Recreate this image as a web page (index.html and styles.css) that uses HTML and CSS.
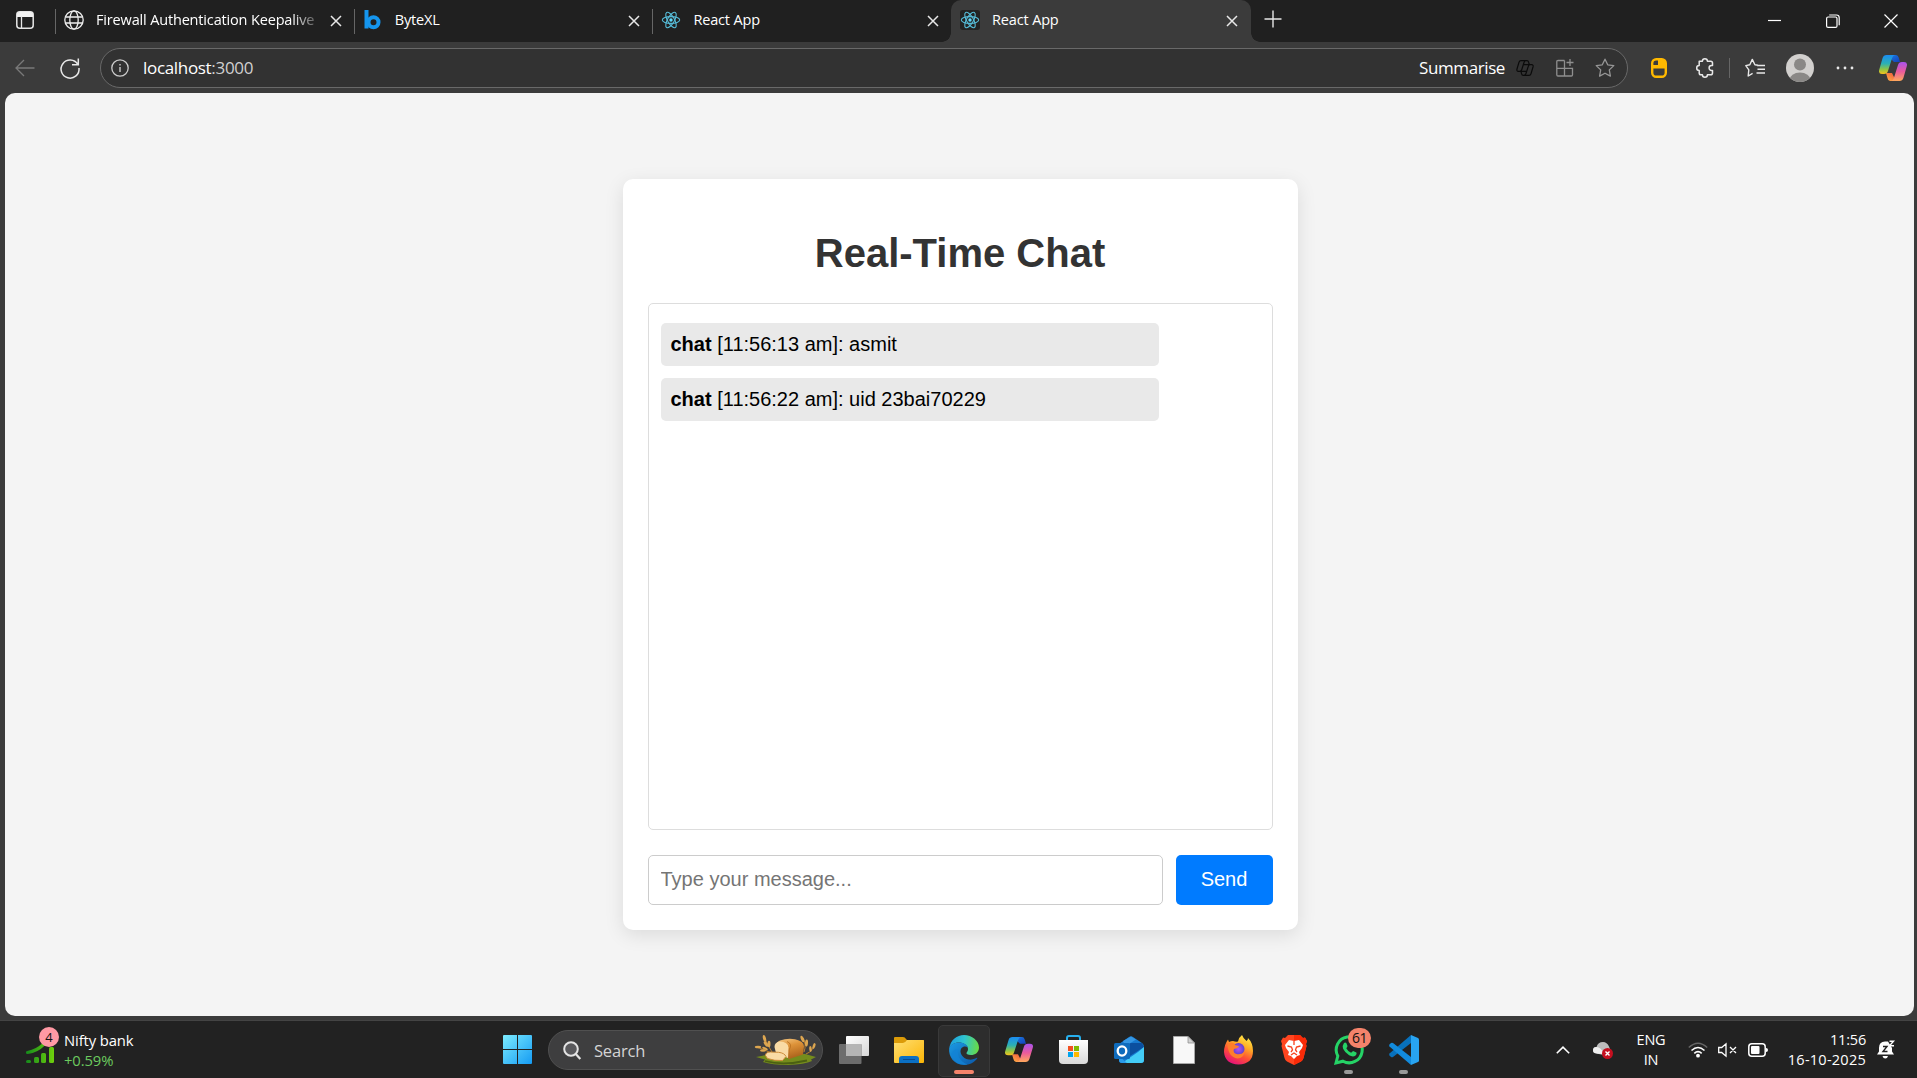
FILE: index.html
```html
<!DOCTYPE html>
<html lang="en">
<head>
<meta charset="utf-8">
<title>React App</title>
<link rel="stylesheet" href="styles.css">
</head>
<body>
<svg class="defs" width="0" height="0" aria-hidden="true">
  <defs>
    <linearGradient id="cpA" x1="0" y1="0" x2="0" y2="1"><stop offset="0" stop-color="#1b8cf2"/><stop offset=".45" stop-color="#2bb0b5"/><stop offset=".75" stop-color="#8fc544"/><stop offset="1" stop-color="#f7c31c"/></linearGradient>
    <linearGradient id="cpB" x1="0" y1="0" x2="0" y2="1"><stop offset="0" stop-color="#a953ee"/><stop offset=".5" stop-color="#ea5a9c"/><stop offset="1" stop-color="#ffa85c"/></linearGradient>
    <linearGradient id="cpC" x1="0" y1="0" x2="1" y2="1"><stop offset="0" stop-color="#1b7fe8"/><stop offset="1" stop-color="#1440b8"/></linearGradient>
    <linearGradient id="cpD" x1="0" y1="1" x2="1" y2="0"><stop offset="0" stop-color="#ffb347"/><stop offset="1" stop-color="#ee4b3a"/></linearGradient>
    <symbol id="x" viewBox="0 0 12 12"><path d="M1 1l10 10M11 1L1 11" stroke="#e8e8e8" stroke-width="1.5" fill="none"/></symbol>
    <symbol id="react" viewBox="0 0 20 20"><g fill="none" stroke="#56bcd8" stroke-width="1.1"><ellipse cx="10" cy="10" rx="8.7" ry="3.4"/><ellipse cx="10" cy="10" rx="8.7" ry="3.4" transform="rotate(60 10 10)"/><ellipse cx="10" cy="10" rx="8.7" ry="3.4" transform="rotate(120 10 10)"/></g><circle cx="10" cy="10" r="1.7" fill="#61dafb"/></symbol>
    <symbol id="copilot" viewBox="0 0 28 26"><path d="M8 0h9q2 0 2.700 2.500L21 7h-6z" fill="url(#cpC)"/><path d="M10 26H19q-3 0-3.500-3L13 18H7l1.400 5q.6 3 2.600 3z" fill="url(#cpD)"/><path d="M7.500 0H16q-2 .3-2.900 3L9 16q-.8 3-4 3H3q-4 0-2.700-4.500L3.600 3Q4.500 0 7.500 0z" fill="url(#cpA)"/><path d="M20.500 26H12q2-.3 2.900-3L19 10q.8-3 4-3h2q4 0 2.700 4.500L24.400 23Q23.500 26 20.500 26z" fill="url(#cpB)"/></symbol>
  </defs>
</svg>

<header class="tabstrip">
  <svg class="workspace" viewBox="0 0 18 18"><rect x=".8" y=".8" width="16.400" height="16.400" rx="3" fill="none" stroke="#e6e6e6" stroke-width="1.500"/><path d="M1 3.500Q1 1 3.500 1h11Q17 1 17 3.500V6H1z" fill="#f2f2f2"/><path d="M5.500 5v12" stroke="#e6e6e6" stroke-width="1.300"/></svg>
  <div class="tab divided">
    <svg class="fav" viewBox="0 0 20 20"><g fill="none" stroke="#eee" stroke-width="1.300"><circle cx="10" cy="10" r="9.200"/><ellipse cx="10" cy="10" rx="4.200" ry="9.200"/><path d="M1.500 7h17M1.500 13h17"/></g></svg>
    <span class="tab-title fade">Firewall Authentication Keepalive</span>
    <svg class="close"><use href="#x"/></svg>
  </div>
  <div class="tab divided">
    <svg class="fav" viewBox="0 0 20 20"><path d="M3.500 0v18.500" stroke="#1595ee" stroke-width="4"/><circle cx="10.500" cy="12.200" r="5" fill="none" stroke="#1595ee" stroke-width="4"/></svg>
    <span class="tab-title">ByteXL</span>
    <svg class="close"><use href="#x"/></svg>
  </div>
  <div class="tab divided">
    <svg class="fav"><use href="#react"/></svg>
    <span class="tab-title">React App</span>
    <svg class="close"><use href="#x"/></svg>
  </div>
  <div class="tab active">
    <svg class="fav tile"><use href="#react"/></svg>
    <span class="tab-title">React App</span>
    <svg class="close"><use href="#x"/></svg>
  </div>
  <svg class="newtab" viewBox="0 0 18 18"><path d="M9 .5v17M.5 9h17" stroke="#e6e6e6" stroke-width="1.400"/></svg>
  <div class="controls">
    <svg viewBox="0 0 14 14"><path d="M0 6.500h13" stroke="#fff" stroke-width="1.200"/></svg>
    <svg viewBox="0 0 14 14"><rect x=".6" y="3" width="10.400" height="10.400" rx="1.500" fill="none" stroke="#fff" stroke-width="1.200"/><path d="M3.200 1h7.300q2.700 0 2.700 2.700v7.500" fill="none" stroke="#fff" stroke-width="1.200"/></svg>
    <svg viewBox="0 0 14 14"><path d="M.5.5l13 13M13.500.5l-13 13" stroke="#fff" stroke-width="1.200"/></svg>
  </div>
</header>

<nav class="toolbar">
  <svg class="back" viewBox="0 0 20 18"><path d="M19.500 9H1M9 1L1 9l8 8" fill="none" stroke="#797979" stroke-width="1.300"/></svg>
  <svg class="reload" viewBox="0 0 20 20"><path d="M17.800 6.500A9 9 0 1 0 19 10M18.300 .5v6.300h-6.300" fill="none" stroke="#e8e8e8" stroke-width="1.500"/></svg>
  <div class="address">
    <svg class="info" viewBox="0 0 18 18"><circle cx="9" cy="9" r="8.200" fill="none" stroke="#ccc" stroke-width="1.300"/><path d="M9 8v5M9 5v1.500" stroke="#ccc" stroke-width="1.400"/></svg>
    <span class="url">localhost<span class="port">:3000</span></span>
    <span class="summarise">Summarise</span>
    <svg class="a-copilot" viewBox="0 0 18 16"><g fill="none" stroke="#0b0b0b" stroke-width="1.200"><path d="M5 .7h6q1.200 0 1.600 1.500l.7 2.300M5 .7q-1.500 0-2 1.600L1 9q-.6 2.300 1.400 2.300h1.400q1.500 0 2-1.800L8 2.500Q8.600.7 10 .7M13 15.300H7.200q-1.200 0-1.600-1.500L5 11.300M13 15.300q1.500 0 2-1.600L17 7q.6-2.300-1.400-2.300h-1.400q-1.500 0-2 1.800L10 13.500q-.6 1.800-2 1.800M7 4.700h7M5 11.300h6"/></g></svg>
    <svg class="a-apps" viewBox="0 0 18 18"><path d="M8.500 1.500H2q-1.200 0-1.200 1.200v13.100Q.8 17 2 17h13.300q1.200 0 1.200-1.200V9.300H.8M8.500 1.500V17M14 0v7M10.500 3.500h7" fill="none" stroke="#8f8f8f" stroke-width="1.300"/></svg>
    <svg class="a-star" viewBox="0 0 20 20"><path d="M10 1.200l2.700 5.600 6.100.8-4.500 4.300 1.100 6.200L10 15.200l-5.400 2.900 1.100-6.200L1.200 7.600l6.100-.8z" fill="none" stroke="#969696" stroke-width="1.300" stroke-linejoin="round"/></svg>
  </div>
  <svg class="mouse" viewBox="0 0 16 20"><rect x="1.200" y="1.200" width="13.600" height="17.600" rx="4" fill="none" stroke="#ffb900" stroke-width="2.400"/><path d="M1.500 10.500h13V5q0-3.500-3.500-3.500H7V7H1.500z" fill="#ffb900"/></svg>
  <svg class="puzzle" viewBox="0 0 18 20"><path d="M3.200 3.200h3.200a2.500 2.500 0 0 1 5 0h3.300q1.800 0 1.800 1.800v2.600h-1a2.400 2.400 0 0 0 0 4.800h1V15q0 1.800-1.800 1.800h-3.300a2.500 2.500 0 0 1-5 0H5q-1.800 0-1.800-1.800v-2.500a2.500 2.500 0 0 1 0-5z" fill="none" stroke="#e8e8e8" stroke-width="1.500" stroke-linejoin="round"/></svg>
  <i class="rule"></i>
  <svg class="favs" viewBox="0 0 20 20"><path d="M13 7.200l-3.100-.4-2.600-5.400-2.500 5.400-4 .8 3 4.200-.6 6.200 4.400-2.700M12 7.500h8M12.500 11.300H20M11.500 15H20" fill="none" stroke="#e8e8e8" stroke-width="1.400" stroke-linejoin="round"/></svg>
  <svg class="avatar" viewBox="0 0 28 28"><defs><clipPath id="av"><circle cx="14" cy="14" r="14"/></clipPath></defs><g clip-path="url(#av)"><path d="M0 0h28v28H0z" fill="#d2d0ce"/><circle cx="14" cy="10.500" r="6" fill="#8a8886"/><ellipse cx="14" cy="26" rx="10.500" ry="7.500" fill="#8a8886"/></g></svg>
  <svg class="dots" viewBox="0 0 18 4"><g fill="#e8e8e8"><circle cx="2" cy="2" r="1.400"/><circle cx="9" cy="2" r="1.400"/><circle cx="16" cy="2" r="1.400"/></g></svg>
  <svg class="copilot"><use href="#copilot"/></svg>
</nav>

<main class="page">
  <section class="card">
    <h1>Real-Time Chat</h1>
    <div class="messages">
      <p class="message"><strong>chat</strong> [11:56:13 am]: asmit</p>
      <p class="message"><strong>chat</strong> [11:56:22 am]: uid 23bai70229</p>
    </div>
    <form class="composer">
      <input type="text" placeholder="Type your message...">
      <button type="button">Send</button>
    </form>
  </section>
</main>

<footer class="taskbar">
  <div class="widget">
    <div class="w-icon">
      <svg viewBox="0 0 28 20"><defs><linearGradient id="gr" x1="0" x2="28" y1="0" y2="0" gradientUnits="userSpaceOnUse"><stop offset="0" stop-color="#158a1c"/><stop offset="1" stop-color="#6fd00c"/></linearGradient></defs><g fill="url(#gr)"><rect x="0" y="17" width="5" height="3" rx="1.500"/><rect x="8" y="14" width="5" height="6" rx="1.500"/><rect x="15" y="10" width="5" height="10" rx="1.500"/><rect x="23" y="4" width="5" height="16" rx="1.500"/></g><path d="M1.500 9.500Q11 8 18 1" fill="none" stroke="url(#gr)" stroke-width="3.200" stroke-linecap="round"/></svg>
      <span class="w-badge">4</span>
    </div>
    <div class="w-text"><div>Nifty bank</div><div class="up">+0.59%</div></div>
  </div>

  <div class="apps">
    <div class="app"><svg width="29" height="29" viewBox="0 0 29 29"><defs><linearGradient id="win" x1="0" y1="0" x2="29" y2="29" gradientUnits="userSpaceOnUse"><stop offset="0" stop-color="#7cecff"/><stop offset="1" stop-color="#159bf3"/></linearGradient></defs><path d="M1 0h13v14H0V1q0-1 1-1zM15 0h13q1 0 1 1v13H15zM0 15h14v14H1q-1 0-1-1zM15 15h14v13q0 1-1 1H15z" fill="url(#win)"/></svg></div>
    <div class="search">
      <svg class="lens" viewBox="0 0 18 19"><circle cx="8" cy="8" r="6.800" fill="#59595c" stroke="#e4e4e4" stroke-width="2"/><path d="M12.800 13l4.500 5" stroke="#e4e4e4" stroke-width="2.200"/></svg>
      <span>Search</span>
      <svg class="bread" viewBox="0 0 61 30"><defs><linearGradient id="br" x1=".2" y1="0" x2=".6" y2="1"><stop offset="0" stop-color="#f2c27a"/><stop offset=".4" stop-color="#dd9238"/><stop offset="1" stop-color="#a9601a"/></linearGradient></defs><path d="M1 22l13-2.500 36-.5 11 3-5 2.500 1 1.500q-7 3.500-24 4-16 0-25-3l2-2.500z" fill="#758c1c"/><path d="M10 26q18 5 42-.5" stroke="#4b6012" stroke-width="1.800" fill="none"/><g fill="none" stroke="#b97d2e"><path d="M17 17Q12 9 9 2M16 18Q9 14 1 12M49 17Q52 9 47 2M51 19Q58 16 59 10"/></g><g fill="#dda650"><ellipse cx="9.500" cy="3.500" rx="1.500" ry="3.500" transform="rotate(-15 9.500 3.500)"/><ellipse cx="11" cy="9" rx="1.500" ry="3.200" transform="rotate(-38 11 9)"/><ellipse cx="14" cy="9" rx="1.500" ry="3.200" transform="rotate(0 14 9)"/><ellipse cx="3" cy="12" rx="3.200" ry="1.300"/><ellipse cx="8" cy="15.500" rx="3" ry="1.200"/><ellipse cx="10" cy="13.500" rx="3" ry="1.200" transform="rotate(25 10 13.500)"/><ellipse cx="47.500" cy="4" rx="1.500" ry="3.500" transform="rotate(-25 47.500 4)"/><ellipse cx="51.500" cy="8" rx="1.500" ry="3.500" transform="rotate(5 51.500 8)"/><ellipse cx="59" cy="11" rx="1.300" ry="3" transform="rotate(20 59 11)"/><ellipse cx="55.500" cy="14" rx="1.300" ry="3" transform="rotate(-5 55.500 14)"/></g><path d="M25 5.500Q32 3 40 4.200q9 1.800 9 7.300l-1 8-14 4.500-7-8-6-5q0-4 4-5.500z" fill="url(#br)"/><path d="M34 24V15q4-6-2-8.500" fill="none" stroke="#b66e20" stroke-width=".8"/><path d="M19.500 12q0-5 5.500-5.500 8 .5 8.500 6L33 23l-12-5z" fill="#f9dba5"/><path d="M10.500 20.500q0-3.500 5-3.500l8 .3q6 .7 7.500 4.200l-3.500 4q-8 .5-15-2z" fill="#f9dba5" stroke="#cd8c3a"/></svg>
    </div>
    <div class="app"><svg width="30" height="28" viewBox="0 0 30 28"><defs><linearGradient id="tv" x1="0" y1="0" x2="1" y2="1"><stop offset="0" stop-color="#fff"/><stop offset="1" stop-color="#d8d8d8"/></linearGradient></defs><rect x="7" y="0" width="23" height="20" rx="1" fill="url(#tv)"/><rect x="0" y="8" width="22.500" height="20" rx="1" fill="#6d6d6d"/><path d="M7 8h15.500v12H7z" fill="#b5b5b5"/></svg></div>
    <div class="app"><svg width="30" height="28" viewBox="0 0 30 28"><defs><linearGradient id="fo" x1="0" y1="0" x2="1" y2="1"><stop offset="0" stop-color="#ffdf72"/><stop offset="1" stop-color="#fbb506"/></linearGradient></defs><path d="M0 2q0-1 1-1h8q2 0 3 2l1 1h16q1 0 1 1v5H0z" fill="#dc9b08"/><path d="M0 7h9q2 0 4-3h16q1 0 1 1v21q0 1-1 1H1q-1 0-1-1z" fill="url(#fo)"/><path d="M5 27v-4q0-3 3-3h14q3 0 3 3v4z" fill="#0b70c4"/><path d="M9 23.500h12" stroke="#084b91"/></svg></div>
    <div class="app current"><svg width="30" height="30" viewBox="0 0 30 30"><defs><linearGradient id="eg" x1="0" y1=".3" x2="1" y2=".4"><stop offset="0" stop-color="#1c9ee0"/><stop offset=".5" stop-color="#2fc4cf"/><stop offset="1" stop-color="#68db46"/></linearGradient><linearGradient id="eb" x1="0" y1="0" x2="1" y2="1"><stop offset="0" stop-color="#1b9be4"/><stop offset="1" stop-color="#0b57a8"/></linearGradient></defs><path d="M.3 13C1.500 5 8 0 15 0c8 0 15 6 15 12.500 0 5-4 7.500-8 7.500-3.500 0-5-1.300-4.500-2.300.8-1 1.500-2 1.500-3.700C19 10 14 7.500 10 7.500 5 7.500 1.500 10 .3 13z" fill="url(#eg)"/><path d="M.2 13C2 9 6 7.500 10 7.500c4.500 0 8 2 9 5-2-1.700-5-1.400-6.500.5-3 4.500 1 10.500 7 11.500 3 .5 6-.5 8.300-1.800.5-.2.800.2.500.6C25.500 27.500 20.500 30 15 30 5 30-.8 21.500.2 13z" fill="url(#eb)"/><path d="M9.500 14c-2 6 1.500 13 9 15.500-9 1.500-15.500-4-16-10 0-3 3-5.500 7-5.500z" fill="#1383d6" opacity=".8"/></svg><i class="mark"></i></div>
    <div class="app"><svg width="28" height="25" viewBox="0 0 28 26" preserveAspectRatio="none"><use href="#copilot"/></svg></div>
    <div class="app"><svg width="29" height="30" viewBox="0 0 29 30"><defs><linearGradient id="st" x1="0" y1="0" x2="0" y2="1"><stop offset="0" stop-color="#fff"/><stop offset="1" stop-color="#d9d9d9"/></linearGradient></defs><path d="M8 6V3q0-2 2-2h9q2 0 2 2v3" fill="none" stroke="#27b0ee" stroke-width="2"/><path d="M0 5h29v20q0 4-4 4H4q-4 0-4-4z" fill="url(#st)"/><path d="M9 11h5v5H9z" fill="#f25022"/><path d="M15 11h5v5h-5z" fill="#7fba00"/><path d="M9 17h5v5H9z" fill="#00a4ef"/><path d="M15 17h5v5h-5z" fill="#ffb900"/></svg></div>
    <div class="app"><svg width="30" height="28" viewBox="0 0 30 28"><path d="M5 8l10-7q2-1.500 4 0l9 6q2 1.500 2 4v13q0 3-3 3H8q-3 0-3-3z" fill="#1679cf"/><path d="M15 7l13 0 2 4-14 9z" fill="#0b4f9f"/><path d="M9 5l8-4.500 5 3-11 7z" fill="#3597e4"/><path d="M30 11v13q0 3-3 3H8l16-11z" fill="#44cdf7"/><path d="M5 20l8 7H8q-3 0-3-3z" fill="#2a9bea"/><rect x="0" y="7" width="16" height="16" rx="1.500" fill="#0f6cbd"/><ellipse cx="8" cy="15" rx="4.300" ry="4.600" fill="none" stroke="#fff" stroke-width="2.300"/></svg></div>
    <div class="app"><svg width="22" height="28" viewBox="0 0 22 28"><path d="M.5.500H15L21.500 7v20.500H.5z" fill="#f8f8f8" stroke="#a8a8a8"/><path d="M15 .5V7h6.500z" fill="#d2d2d2" stroke="#888" stroke-width=".7"/></svg></div>
    <div class="app"><svg width="29" height="30" viewBox="0 0 29 30"><defs><linearGradient id="ff" x1=".8" y1="0" x2=".3" y2="1"><stop offset="0" stop-color="#fff04a"/><stop offset=".35" stop-color="#ffab25"/><stop offset=".65" stop-color="#ff5036"/><stop offset="1" stop-color="#e4107c"/></linearGradient><radialGradient id="fp"><stop offset="0" stop-color="#b254f3"/><stop offset="1" stop-color="#6040cc"/></radialGradient></defs><path d="M18 0q1 3 4.500 6Q24 5 24 3q5 5 5 13 0 13-14.500 13.500Q1 29 0 17 0 10 4 4.500L5 7q2-1 4-1 3 1 5 .5Q15 2 18 0z" fill="url(#ff)"/><circle cx="14.500" cy="14" r="6" fill="url(#fp)"/><path d="M3.500 9q6-3 7.500 1l4 1.300q-1 2.200-5 2.700-1.500 3.500 2.500 5 4 1 8-2-1 6-7 6.500Q4 22 3.500 9z" fill="#ff7e2c"/></svg></div>
    <div class="app"><svg width="26" height="30" viewBox="0 0 26 30"><path d="M7 0h12l3 3 2-.5 2 3.500-1 3 .5 2-3 12q-.5 2-2.500 3.500L13 30l-7-3.500Q4 25 3.500 23L.5 11 1 9 0 6l2-3.500L4 3z" fill="#ff4520"/><path d="M13 0h6l3 3 2-.5 2 3.500-1 3 .5 2-3 12q-.5 2-2.500 3.500L13 30z" fill="#f92b08"/><path d="M8 5l5 1 5-1 4 5-1 3-3 4 1 3-3 1-3 3-3-3-3-1 1-3-3-4-1-3z" fill="#fff"/><path d="M6.500 11l4 1 1 3-1.500 2M19.500 11l-4 1-1 3 1.500 2M10 20l3-2 3 2M13 6v4" fill="none" stroke="#f8411d" stroke-width="1.300"/></svg></div>
    <div class="app"><svg width="30" height="30" viewBox="0 0 30 30"><path d="M2 28l1.800-7A13 13 0 1 1 9 26.200z" fill="none" stroke="#25d366" stroke-width="3"/><path d="M10 8q1.200-1.200 2.300 0l1.200 3q0 1-1.200 2.200 1.700 3.300 4.800 4.600l2-1.900 3.300 1.600q.8 1.500-.8 3-2.500 2-6.500-.2-4-2.300-6-6.500-1-3.500.9-5.800z" fill="#25d366"/></svg><span class="count">61</span><i class="mark idle"></i></div>
    <div class="app"><svg width="30" height="30" viewBox="0 0 30 30"><path d="M22 0l7 3q1 .5 1 1.500v21q0 1-1 1.500l-7 3z" fill="#28a4f1"/><path d="M22 0v8L4 22q-1 .7-2 0l-1.500-1.500q-.8-1 0-2z" fill="#0871bc"/><path d="M22 30v-8L4 8q-1-.7-2 0L.5 9.500q-.8 1 0 2z" fill="#128bdd"/></svg><i class="mark idle"></i></div>
  </div>

  <div class="tray">
    <svg class="chev" viewBox="0 0 14 8"><path d="M.8 7.300L7 1.200l6.200 6.100" fill="none" stroke="#fff" stroke-width="1.600"/></svg>
    <svg class="cloud" viewBox="0 0 20 18"><path d="M3.500 12.500Q0 12.500 0 9.300T3.500 6Q5 1 10 1q4 0 6 4.500l2 5-5 4z" fill="#bdbdbd"/><path d="M3.500 6Q8 6 11 13l-6-.3Q0 12.500 0 9.300T3.500 6z" fill="#efefef"/><circle cx="14.500" cy="12.500" r="5.500" fill="#c50f1f"/><path d="M12.500 10.500l4 4M16.500 10.500l-4 4" stroke="#fff" stroke-width="1.400"/></svg>
    <div class="lang"><div>ENG</div><div>IN</div></div>
    <svg class="wifi" viewBox="0 0 20 16"><g fill="none" stroke-width="1.600"><path d="M.8 5.500Q10-3 19.200 5.500" stroke="#666"/><path d="M3.500 8.500q6.500-6 13 0M6.300 11.300q3.700-3.500 7.400 0" stroke="#fff"/></g><circle cx="10" cy="13.700" r="1.900" fill="#fff"/></svg>
    <svg class="vol" viewBox="0 0 19 14"><path d="M.7 4.500h3L8 .8v12.400L3.700 9.500h-3zM12 4l6 6M18 4l-6 6" fill="none" stroke="#fff" stroke-width="1.300"/></svg>
    <svg class="batt" viewBox="0 0 20 14"><rect x=".8" y=".8" width="16.400" height="12.400" rx="3" fill="none" stroke="#fff" stroke-width="1.500"/><rect x="3" y="3" width="8.500" height="8" rx="1" fill="#fff"/><path d="M18 5q2 0 2 2t-2 2z" fill="#fff"/></svg>
    <div class="clock"><div>11:56</div><div class="date">16-10-2025</div></div>
    <svg class="bell" viewBox="0 0 18 19"><path d="M0 14.500l2-3V8q0-6.500 6-6.500h3L15 8v3.500l2 3z" fill="#fff"/><path d="M5.500 16h5.500q-.6 2.500-2.700 2.500T5.500 16z" fill="#fff"/><path d="M6 6.500h4L6 11.500h4.500" fill="none" stroke="#222" stroke-width="1.400"/><path d="M12.500 1.200h4l-4 4.600H17" fill="none" stroke="#fff" stroke-width="1.400"/></svg>
  </div>
</footer>
</body>
</html>
```

FILE: styles.css
```css
* { box-sizing: border-box; }
html, body { height: 100%; }
body {
  margin: 0;
  display: flex;
  flex-direction: column;
  overflow: hidden;
  background: #3b3b3b;
  font-family: "Open Sans", "Noto Sans", sans-serif;
  color: #fff;
}
svg { display: block; flex: none; overflow: visible; }
.defs { height: 0; }

/* tab strip */
.tabstrip { display: flex; height: 42px; background: #202020; flex: none; }
.workspace { width: 18px; height: 18px; margin: 11px 21px 0 16px; }
.tab { position: relative; display: flex; width: 298.700px; height: 42px; padding: 0 12px 2px 9px; align-items: center; }
.tab.divided::before { content: ""; position: absolute; left: 0; top: 9px; width: 1px; height: 25px; background: #666; }
.tab.active { width: 300px; padding-right: 13px; background: #3b3b3b; border-radius: 10px 10px 0 0; }
.tab.active::before, .tab.active::after {
  content: ""; position: absolute; bottom: 0; width: 9px; height: 9px;
}
.tab.active::before { left: -9px; background: radial-gradient(circle at 0 0, #202020 8.500px, #3b3b3b 9px); }
.tab.active::after { right: -9px; background: radial-gradient(circle at 100% 0, #202020 8.500px, #3b3b3b 9px); }
.fav { width: 20px; height: 20px; }
.tile { background: #232323; border-radius: 3px; }
.tab-title { margin-left: 12px; flex: 1; font-size: 14.500px; letter-spacing: -.16px; line-height: 20px; white-space: nowrap; }
.fade { -webkit-mask-image: linear-gradient(90deg, #000 195px, transparent 228px); mask-image: linear-gradient(90deg, #000 195px, transparent 228px); }
.close { width: 12px; height: 12px; margin: 1px 0 0 8px; }
.newtab { width: 18px; height: 18px; margin: 10px 0 0 13px; }
.controls { display: flex; gap: 44px; margin: 14px 19px 0 auto; }
.controls svg { width: 14px; height: 14px; }

/* toolbar */
.toolbar { display: flex; align-items: center; height: 51px; padding: 0 10px 0 15px; flex: none; }
.back { width: 20px; height: 18px; }
.reload { width: 20px; height: 20px; margin: 0 20px 0 25px; }
.address {
  display: flex; align-items: center;
  width: 1528px; height: 40px; padding: 0 12px 0 10px;
  border: 1px solid #696969; border-radius: 20px; background: #323232;
}
.info { width: 18px; height: 18px; }
.url { margin-left: 14px; font-size: 17px; letter-spacing: -.32px; }
.port { color: #d0d0d0; }
.summarise { margin-left: auto; font-size: 17px; letter-spacing: -.4px; }
.a-copilot { width: 18px; height: 16px; margin-left: 11px; }
.a-apps { width: 18px; height: 18px; margin-left: 22px; }
.a-star { width: 20px; height: 20px; margin-left: 21px; }
.mouse { width: 16px; height: 20px; margin-left: 23px; }
.puzzle { width: 18px; height: 20px; margin-left: 29px; }
.rule { width: 1px; height: 20px; margin-left: 15px; background: #666; }
.favs { width: 20px; height: 20px; margin-left: 15px; }
.avatar { width: 28px; height: 28px; margin-left: 21px; }
.dots { width: 18px; height: 4px; margin-left: 22px; }
.copilot { width: 28px; height: 26px; margin-left: 25px; }

/* page */
.page {
  flex: none; height: 923px; margin: 0 3px 0 5px; padding-left: 1px; border-radius: 10px;
  display: flex; justify-content: center; align-items: center;
  background: #f4f4f4; color: #000;
  font-family: "Liberation Sans", Arial, sans-serif; font-size: 20px;
}
.card {
  width: 675px; height: 751px; padding: 25px;
  display: flex; flex-direction: column;
  background: #fff; border-radius: 10px; box-shadow: 0 5px 19px rgba(0, 0, 0, .1);
}
h1 { margin: 26px 0 30px; font-size: 40px; line-height: 46px; height: 43px; text-align: center; color: #333; }
.messages { height: 527px; padding: 19px 12px; border: 1px solid #ddd; border-radius: 5px; }
.message { width: 498px; height: 43px; margin: 0 0 12px; padding: 10px; line-height: 23px; border-radius: 5px; background: #e9e9e9; }
.composer { display: flex; gap: 13px; margin-top: 25px; }
.composer input { width: 515px; height: 50px; padding: 0 12px 2px; border: 1px solid #ccc; border-radius: 5px; font: 20px "Liberation Sans", Arial, sans-serif; }
.composer input::placeholder { color: #757575; }
.composer button { flex: 1; height: 50px; padding: 0 0 2px; border: 0; border-radius: 5px; background: #007bff; color: #fff; font: 20px "Liberation Sans", Arial, sans-serif; }

/* taskbar */
.taskbar { display: flex; margin-top: 4px; flex: 1; background: #222; border-top: 1px solid #444; }
.widget { display: flex; width: 490px; padding: 8px 0 0 26px; }
.w-icon { position: relative; width: 28px; margin-right: 10px; padding-top: 14px; }
.w-icon svg { width: 28px; height: 20px; }
.w-badge { position: absolute; left: 13px; top: -2px; width: 20px; height: 20px; border-radius: 50%; background: #ff99a4; color: #111; font-size: 13px; line-height: 20px; text-align: center; }
.w-text { padding-top: 1px; font-size: 14.800px; line-height: 20px; letter-spacing: -.1px; }
.up { color: #6ccb5f; }
.apps { display: flex; }
.app { position: relative; width: 55px; height: 58px; padding-bottom: 1px; display: flex; align-items: center; justify-content: center; }
.current { z-index: 0; }
.current::before { content: ""; position: absolute; z-index: -1; left: 2px; top: 4px; width: 50px; height: 50px; border: 1px solid #393939; border-radius: 5px; background: #2d2d2d; }
.mark { position: absolute; left: 18px; top: 49px; width: 20px; height: 4px; border-radius: 2px; background: #f4836b; }
.mark.idle { left: 23px; width: 9px; background: #999; }
.count { position: absolute; left: 27px; top: 7px; width: 23px; height: 20px; border-radius: 10px; background: #f4836b; color: #111; font-size: 14px; letter-spacing: -.5px; line-height: 20px; text-align: center; }
.search { display: flex; align-items: center; width: 275px; height: 40px; margin: 9px 3px 0; padding: 0 6px 0 14px; border-radius: 20px; background: #3e3e3f; border: 1px solid #505050; font-size: 16.500px; letter-spacing: -.2px; color: #d4d4d4; }
.lens { width: 18px; height: 19px; margin-right: 13px; }
.bread { width: 61px; height: 30px; margin-left: auto; }
.tray { display: flex; align-items: center; margin-left: auto; padding-right: 22px; padding-bottom: 1px; font-size: 14.500px; line-height: 20px; }
.chev { width: 14px; height: 8px; }
.cloud { width: 20px; height: 18px; margin-left: 23px; }
.lang { width: 40px; margin-left: 18px; text-align: center; letter-spacing: -.2px; }
.wifi { width: 20px; height: 16px; margin-left: 17px; }
.vol { width: 19px; height: 14px; margin-left: 10px; }
.batt { width: 20px; height: 14px; margin-left: 11px; }
.clock { width: 84px; margin-left: 14px; text-align: right; letter-spacing: -.2px; white-space: nowrap; }
.date { letter-spacing: .25px; }
.bell { width: 18px; height: 19px; margin-left: 11px; }
```
